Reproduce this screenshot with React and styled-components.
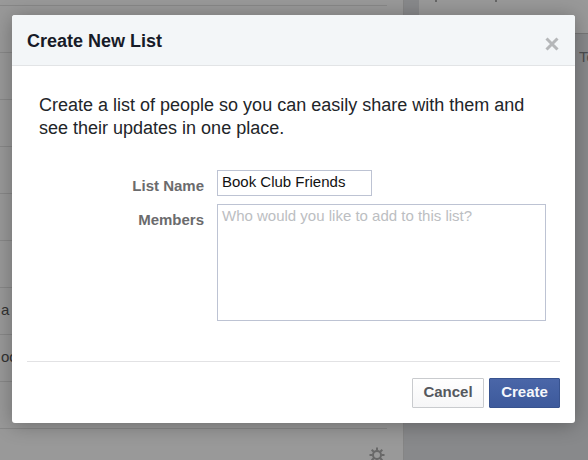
import React, { useState } from 'react';
import styled, { createGlobalStyle } from 'styled-components';

const rows = ['', '', '', '', '', '', 'a', 'oo', ''];

const App = () => {
  const [name, setName] = useState('Book Club Friends');
  const [members, setMembers] = useState('');

  return (
    <>
      <GlobalStyle />
      <Page>
        <Feed>
          <Rows>
            {rows.map((text, i) => (
              <Row key={i}>{text}</Row>
            ))}
          </Rows>
          <Settings type="button" aria-label="Settings">
            <GearIcon />
          </Settings>
        </Feed>
        <Side>
          <SideCard>
            <svg width="64" height="3" viewBox="0 0 64 3" aria-hidden="true">
              <path d="M1 0v2M61 0v2" stroke="#666666" strokeWidth="2" />
            </svg>
          </SideCard>
          <SideText>To</SideText>
        </Side>
      </Page>

      <Overlay>
        <Dialog role="dialog" aria-labelledby="dialog-title">
          <Header>
            <Title id="dialog-title">Create New List</Title>
            <Close type="button" aria-label="Close">
              <svg width="14" height="14" viewBox="0 0 14 14" aria-hidden="true">
                <path d="M1.5 1.5l11 11M12.5 1.5l-11 11" stroke="#b5b7b9" strokeWidth="3" />
              </svg>
            </Close>
          </Header>

          <Body>
            <Intro>Create a list of people so you can easily share with them and see their updates in one place.</Intro>
            <Fields>
              <Label htmlFor="list-name">List Name</Label>
              <NameInput id="list-name" type="text" value={name} onChange={(e) => setName(e.target.value)} />
              <Label htmlFor="members">Members</Label>
              <MembersInput
                id="members"
                placeholder="Who would you like to add to this list?"
                value={members}
                onChange={(e) => setMembers(e.target.value)}
              />
            </Fields>
          </Body>

          <Footer>
            <Button type="button">Cancel</Button>
            <Button type="submit" $primary>
              Create
            </Button>
          </Footer>
        </Dialog>
      </Overlay>
    </>
  );
};

const GearIcon = () => (
  <svg width="16" height="16" viewBox="0 0 16 16" fill="none" stroke="#686868" aria-hidden="true">
    <circle cx="8" cy="8" r="4" strokeWidth="2" />
    <path
      d="M8 0.5v3M8 12.5v3M0.5 8h3M12.5 8h3M2.7 2.7l2.1 2.1M11.2 11.2l2.1 2.1M13.3 2.7l-2.1 2.1M4.8 11.2l-2.1 2.1"
      strokeWidth="2"
    />
  </svg>
);

export default App;

const GlobalStyle = createGlobalStyle`
  * {
    box-sizing: border-box;
  }

  body {
    margin: 0;
    overflow: hidden;
    font-family: "Liberation Sans", Arial, sans-serif;
    background-color: #88898b;
  }

  button,
  input,
  textarea {
    font-family: inherit;
  }
`;

const Page = styled.div`
  display: flex;
  gap: 15px;
  height: 100vh;
  overflow: hidden;
`;

const Feed = styled.div`
  display: flex;
  flex: 1;
  flex-direction: column;
  padding-top: 5px;
  border-right: 1px solid #858585;
  background-color: #999999;
`;

const Rows = styled.div`
  margin-right: 16px;
  border-top: 1px solid #888888;
`;

const Row = styled.div`
  height: 47px;
  padding: 12px 0 0 1px;
  border-bottom: 1px solid #888888;
  color: #333333;
  font-size: 15px;
  line-height: 20px;
`;

const Settings = styled.button`
  display: flex;
  align-self: flex-end;
  margin: 18px 18px 0 0;
  padding: 0;
  border: none;
  background: none;
`;

const Side = styled.div`
  width: 169px;
`;

const SideCard = styled.div`
  display: flex;
  align-items: flex-start;
  height: 34px;
  padding-left: 16px;
  border-bottom: 1px solid #777777;
  background-color: #999999;
`;

const SideText = styled.p`
  margin: 13px 0 0;
  padding-left: 160px;
  color: #4c4d4f;
  font-size: 15px;
  line-height: 20px;
`;

const Overlay = styled.div`
  position: absolute;
  inset: 0;
  padding: 15px 13px 0 12px;
`;

const Dialog = styled.div`
  overflow: hidden;
  border-radius: 3px;
  background-color: #ffffff;
  box-shadow: 0 2px 20px rgba(0, 0, 0, 0.3);
`;

const Header = styled.div`
  display: flex;
  align-items: center;
  justify-content: space-between;
  height: 51px;
  padding: 2px 16px 0 15px;
  border-bottom: 1px solid #e2e4e6;
  background-color: #f3f6f8;
`;

const Title = styled.h1`
  margin: 0;
  color: #171b28;
  font-size: 18px;
  font-weight: bold;
  line-height: 24px;
`;

const Close = styled.button`
  display: flex;
  margin-top: 5px;
  padding: 0;
  border: none;
  background: none;
  cursor: pointer;
`;

const Body = styled.div`
  padding: 28px 29px 40px 27px;
`;

const Intro = styled.p`
  margin: 0;
  color: #222529;
  font-size: 18px;
  line-height: 23px;
`;

const Fields = styled.div`
  display: grid;
  grid-template-columns: 165px 1fr;
  gap: 8px 13px;
  margin-top: 30px;
`;

const Label = styled.label`
  padding-top: 6px;
  color: #6b6b6d;
  font-size: 15px;
  font-weight: bold;
  line-height: 20px;
  text-align: right;
`;

const NameInput = styled.input`
  width: 155px;
  height: 26px;
  padding: 0 4px 4px;
  border: 1px solid #bdc3d3;
  color: #111111;
  font-size: 15px;
`;

const MembersInput = styled.textarea`
  display: block;
  width: 100%;
  height: 117px;
  padding: 1px 4px;
  border: 1px solid #bdc3d3;
  color: #111111;
  font-size: 15px;
  line-height: 20px;
  resize: none;

  &::placeholder {
    color: #bcbec2;
  }
`;

const Footer = styled.div`
  display: flex;
  justify-content: flex-end;
  gap: 5px;
  margin: 0 15px;
  padding: 16px 0 15px;
  border-top: 1px solid #e2e2e4;
`;

const Button = styled.button`
  width: ${(props) => (props.$primary ? '71px' : '72px')};
  height: 30px;
  padding: 0 0 4px;
  border: 1px solid ${(props) => (props.$primary ? '#38538f' : '#c9cbce')};
  border-radius: 1px;
  background: ${(props) =>
    props.$primary ? 'linear-gradient(#4a66a8, #3d5a9c)' : 'linear-gradient(#ffffff, #f6f6f7)'};
  color: ${(props) => (props.$primary ? '#f5f7fb' : '#55585e')};
  font-size: 15px;
  font-weight: bold;
  cursor: pointer;
`;
